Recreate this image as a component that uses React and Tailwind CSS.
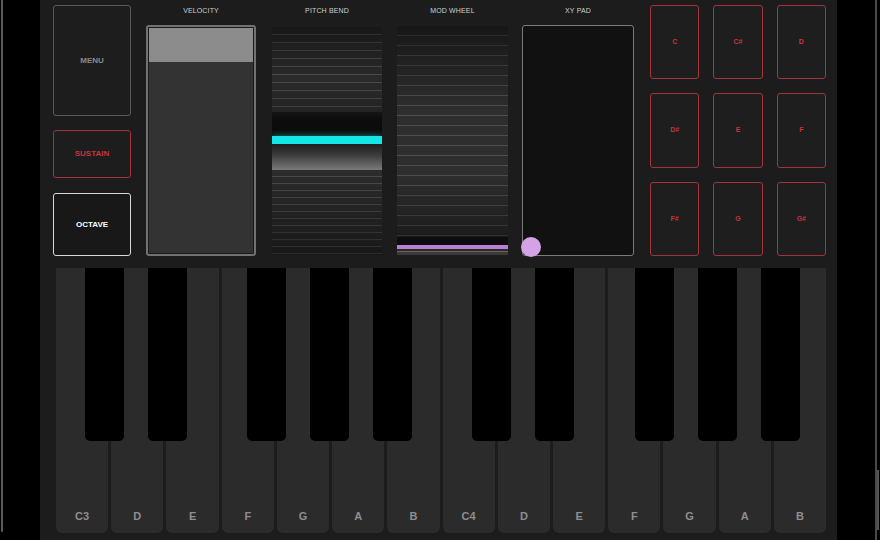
import React from "react";

const whites = ["C3", "D", "E", "F", "G", "A", "B", "C4", "D", "E", "F", "G", "A", "B"];
// black key left offsets relative to keyboard start (x=56)
const blacks = [29, 92, 191, 254, 317, 416, 479, 579, 642, 705];

function Label({ children }) {
  return (
    <div className="h-[13px] mb-[7px] flex items-center justify-center text-[7px] tracking-[0.02em] text-[#cfcfcf]">
      {children}
    </div>
  );
}

function Pad({ label }) {
  return (
    <div className="h-full rounded-[3px] border-[1.5px] border-[#a3343b] bg-[#1e1e1e] flex items-center justify-center text-[7px] font-bold text-[#c4343f]">
      {label}
    </div>
  );
}

export default function App() {
  return (
    <div
      className="w-[880px] h-[540px] bg-black flex overflow-hidden"
      style={{ fontFamily: '"Liberation Sans", Arial, sans-serif' }}
    >
      {/* left bezel */}
      <div className="w-[40px] h-full flex">
        <div className="ml-[1px] w-[2px] h-[532px] bg-[#5a5a5a] rounded-b-full" />
      </div>

      {/* main panel */}
      <div className="w-[797px] h-full bg-[#1c1c1c] flex flex-col">
        {/* controls */}
        <div className="h-[268px] flex pl-[13px] pt-[5px]">
          {/* buttons */}
          <div className="w-[78px] flex flex-col">
            <div className="h-[111px] rounded-[3px] border-[1.5px] border-[#5a5a5a] bg-[#1d1d1d] flex items-center justify-center text-[8px] font-bold text-[#8a8a8a]">
              MENU
            </div>
            <div className="mt-[14px] h-[48px] rounded-[3px] border-[1.5px] border-[#a3343b] bg-[#1d1d1d] flex items-center justify-center text-[8px] font-bold text-[#c4343f]">
              SUSTAIN
            </div>
            <div className="mt-[15px] h-[63px] rounded-[3px] border-[1.5px] border-[#d8d8d8] bg-[#181818] flex items-center justify-center text-[8px] font-bold text-white">
              OCTAVE
            </div>
          </div>

          {/* velocity */}
          <div className="ml-[15px] w-[110px] flex flex-col">
            <Label>VELOCITY</Label>
            <div className="h-[231px] rounded-[3px] border-2 border-[#727272] bg-[#1a1a1a] p-px">
              <div className="h-full bg-[#333333] flex flex-col">
                <div className="h-[34px] bg-[#8c8c8c]" />
              </div>
            </div>
          </div>

          {/* pitch bend */}
          <div className="ml-[16px] w-[110px] flex flex-col">
            <Label>PITCH BEND</Label>
            <div className="mt-[2px] h-[228px] flex flex-col overflow-hidden">
              <div className="h-[85px] relative bg-[image:repeating-linear-gradient(to_bottom,#2a2a2a_0px,#2a2a2a_7px,#4c4c4c_7px,#4c4c4c_8px)]">
                <div className="absolute inset-0 bg-[image:linear-gradient(to_bottom,rgba(0,0,0,0.45),rgba(0,0,0,0)_60%,rgba(20,20,20,0.3))]" />
              </div>
              <div className="h-[24px] bg-[image:linear-gradient(to_bottom,#151515,#0c0c0c_30%,#0c0c0c)]" />
              <div className="h-[8px] bg-[#14e6e8] shadow-[0_0_6px_rgba(20,230,232,0.5)]" />
              <div className="h-[26px] bg-[image:linear-gradient(to_bottom,#1e1e1e,#3a3a3a_40%,#7a7a7a_100%)]" />
              <div className="flex-1 relative bg-[image:repeating-linear-gradient(to_bottom,#2c2c2c_0px,#2c2c2c_6px,#4c4c4c_6px,#4c4c4c_7px)]">
                <div className="absolute inset-0 bg-[image:linear-gradient(to_bottom,rgba(0,0,0,0),rgba(0,0,0,0.45))]" />
              </div>
            </div>
          </div>

          {/* mod wheel */}
          <div className="ml-[15px] w-[111px] flex flex-col">
            <Label>MOD WHEEL</Label>
            <div className="mt-px h-[229px] flex flex-col overflow-hidden">
              <div className="h-[211px] relative bg-[image:repeating-linear-gradient(to_bottom,#2e2e2e_0px,#2e2e2e_9px,#4e4e4e_9px,#4e4e4e_10px)]">
                <div className="absolute inset-0 bg-[image:linear-gradient(to_bottom,rgba(0,0,0,0.5),rgba(0,0,0,0)_40%,rgba(0,0,0,0)_70%,rgba(0,0,0,0.4))]" />
              </div>
              <div className="h-[8px] bg-[#0f0c10]" />
              <div className="h-[4px] bg-[#b57fd4]" />
              <div className="h-[2px] bg-[#2a2a2a]" />
              <div className="h-px bg-[#6d6550]" />
              <div className="flex-1 bg-[#3a3a3a]" />
            </div>
          </div>

          {/* xy pad */}
          <div className="ml-[14px] w-[112px] flex flex-col">
            <Label>XY PAD</Label>
            <div className="h-[231px] relative rounded-[3px] border-[1.5px] border-[#7a7a7a] bg-[#111111]">
              <div className="absolute left-[-2px] bottom-[-2px] w-[20px] h-[20px] rounded-full bg-[#d4a2e6]" />
            </div>
          </div>

          {/* pads */}
          <div className="ml-[16px] w-[176px] h-[251px] grid grid-cols-3 grid-rows-3 gap-x-[14px] gap-y-[14px]">
            {["C", "C#", "D", "D#", "E", "F", "F#", "G", "G#"].map((n) => (
              <Pad key={n} label={n} />
            ))}
          </div>
        </div>

        {/* keyboard */}
        <div className="pl-[16px] h-[265px]">
          <div className="relative w-[770px] h-full flex gap-[3px]">
            {whites.map((n, i) => (
              <div
                key={i}
                className="flex-1 h-full rounded-b-[6px] bg-[#2b2b2b] flex items-end justify-center pb-[9px] text-[11px] font-bold text-[#8e8e8e]"
              >
                {n}
              </div>
            ))}
            {blacks.map((x, i) => (
              <div
                key={i}
                className="absolute top-0 w-[39px] h-[173px] rounded-b-[5px] bg-black"
                style={{ left: x }}
              />
            ))}
          </div>
        </div>
      </div>

      {/* right bezel */}
      <div className="w-[43px] h-full flex justify-end">
        <div className="w-[2px] h-full bg-[#4a4a4a]" />
        <div className="w-[2px] h-full flex flex-col">
          <div className="h-[470px]" />
          <div className="h-[60px] bg-[#555]" />
        </div>
        <div className="w-px" />
      </div>
    </div>
  );
}
